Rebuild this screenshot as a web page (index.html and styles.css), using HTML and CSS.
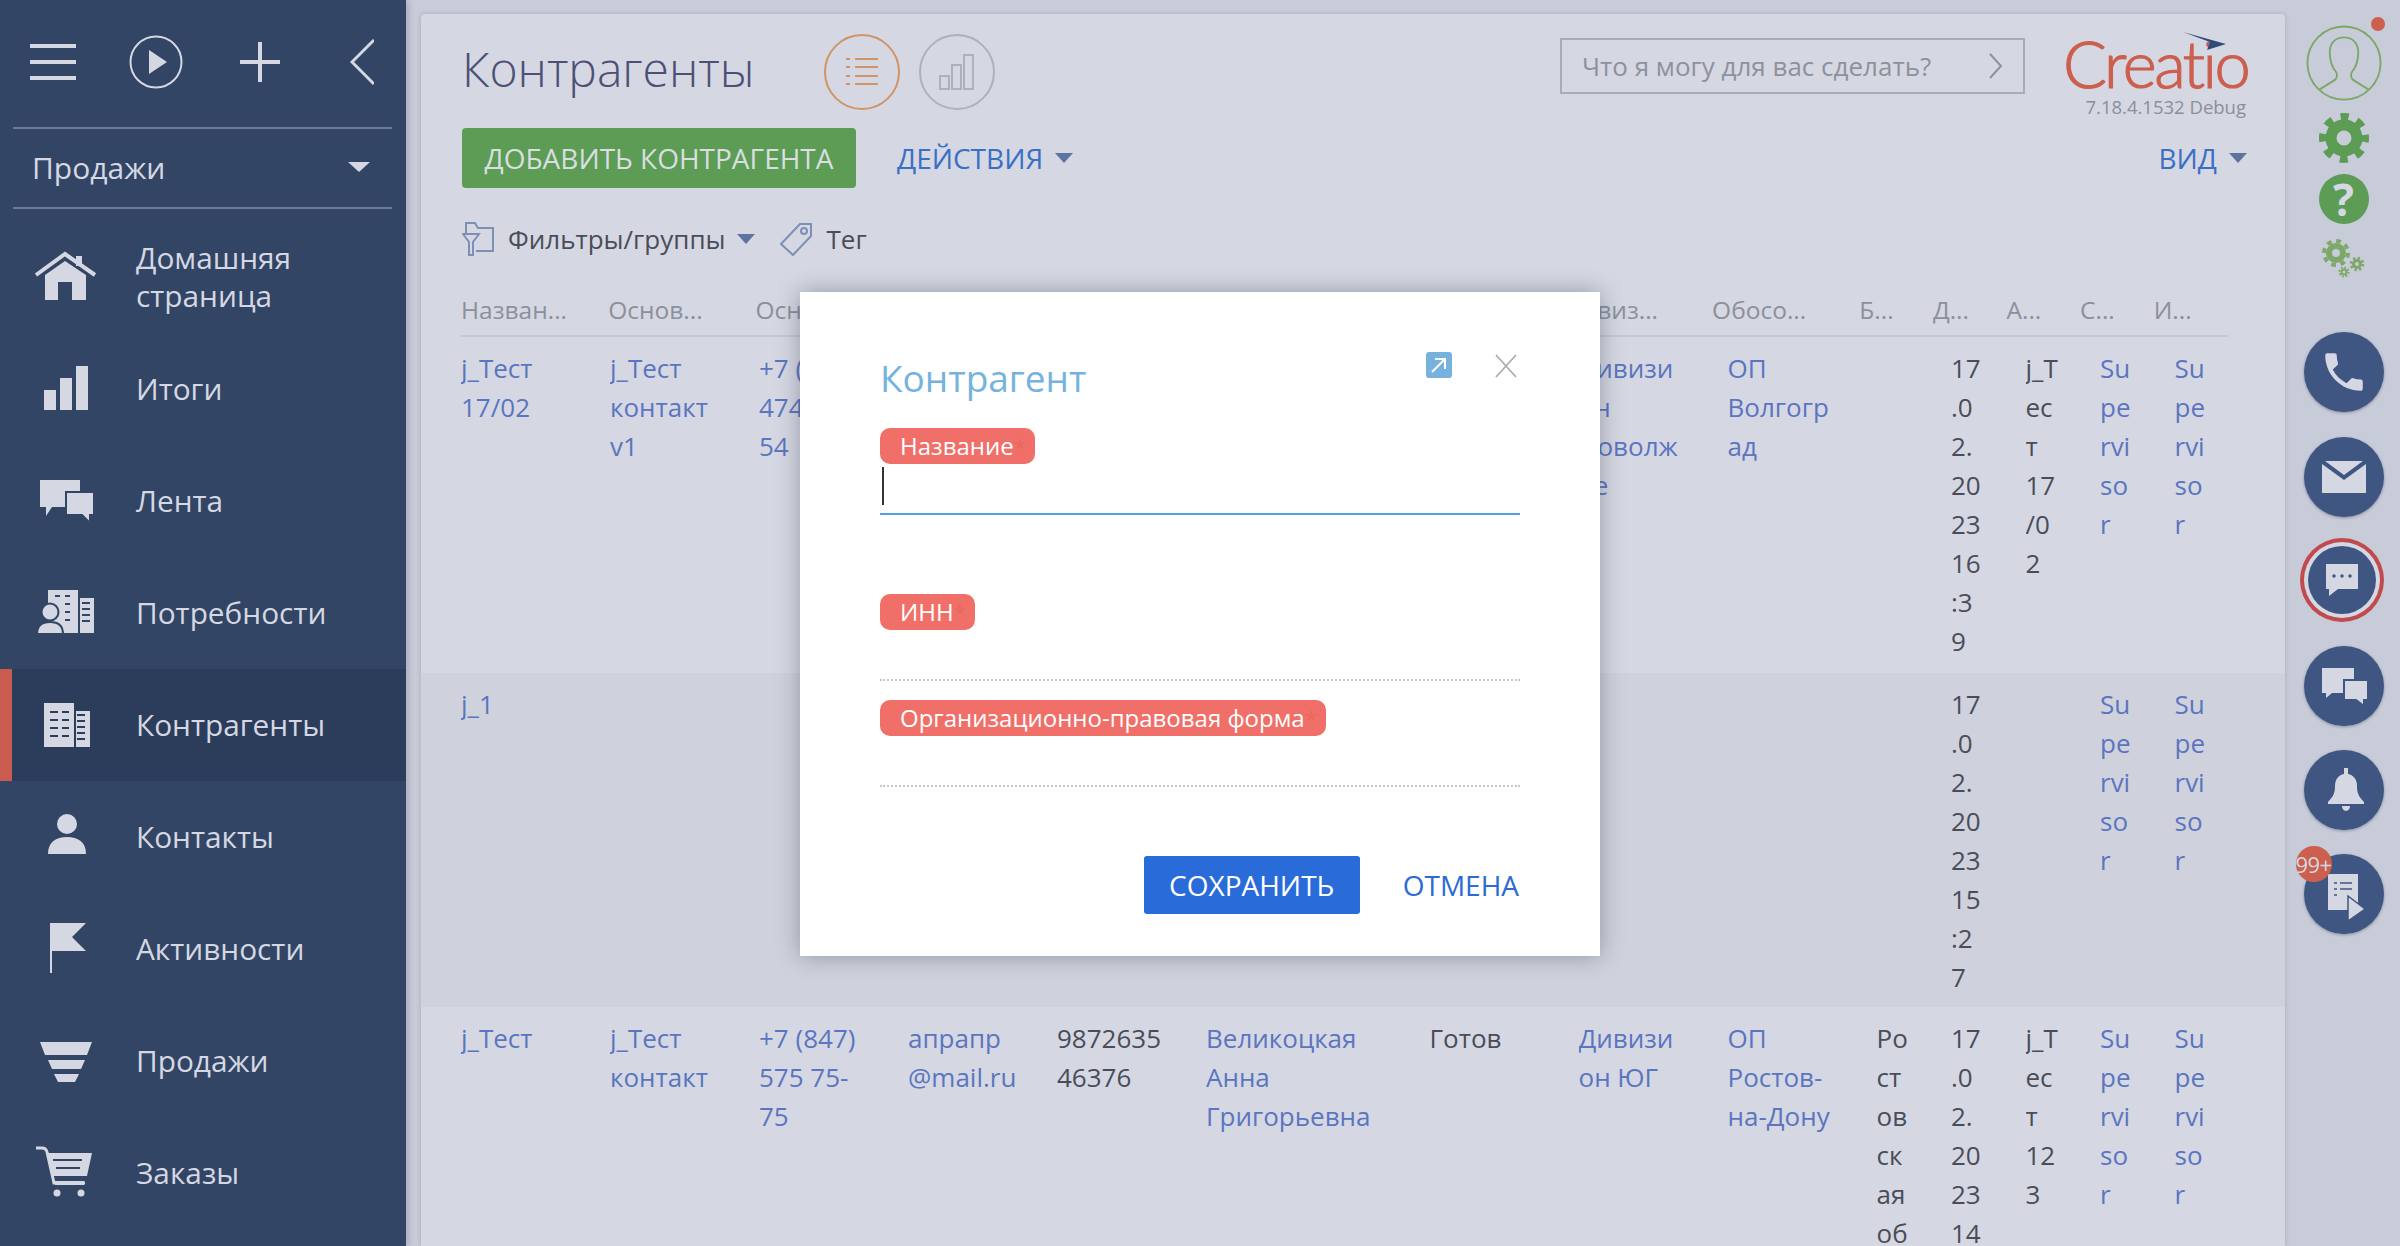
FILE: index.html
```html
<!DOCTYPE html>
<!-- Creatio accounts page with new account dialog -->
<html lang="ru">
<head>
  <meta charset="UTF-8" />
  <title>Контрагенты</title>
  <link rel="stylesheet" href="styles.css">
</head>
<body>
  <div class="app">
    <!-- Left sidebar -->
    <aside class="sidebar">
      <div class="side-top">
        <svg class="ic-burger" width="46" height="36" viewBox="0 0 46 36"><path d="M0 0h46v4H0zM0 16h46v4H0zM0 32h46v4H0z"/></svg>
        <svg class="ic-play" width="54" height="54" viewBox="0 0 54 54"><circle cx="27" cy="27" r="25.5" fill="none" stroke="currentColor" stroke-width="2"/><path d="M20 15l18 12-18 12z"/></svg>
        <svg class="ic-plus" width="40" height="40" viewBox="0 0 40 40"><path d="M18 0h4v18h18v4H22v18h-4V22H0v-4h18z"/></svg>
        <svg class="ic-back" width="24" height="46" viewBox="0 0 24 46"><path d="M24 1L2 23l22 22" fill="none" stroke="currentColor" stroke-width="3"/></svg>
      </div>
      <div class="side-section">
        <span>Продажи</span>
        <i class="caret caret-big"></i>
      </div>
      <nav class="menu">
        <div class="menu-item">
          <svg viewBox="0 0 64 64"><path d="M2 30L31 9l30 21" fill="none" stroke="currentColor" stroke-width="4"/><path d="M42 11h6v10h-6zM11 30l20-14 21 14v25H38V37H24v18H11z"/></svg>
          <span>Домашняя<br>страница</span>
        </div>
        <div class="menu-item">
          <svg viewBox="0 0 64 64"><path d="M10 33h12v20H10zM26 21h12v32H26zM42 9h12v44H42z"/></svg>
          <span>Итоги</span>
        </div>
        <div class="menu-item">
          <svg viewBox="0 0 64 64"><path d="M6 11h40v27H18l-6 9v-9H6z"/><path d="M32 23h28v23h-4v8l-8-8H32z" stroke="#324564" stroke-width="2"/></svg>
          <span>Лента</span>
        </div>
        <div class="menu-item">
          <svg viewBox="0 0 64 64"><path d="M14 9h30v43H14zM46 17h14v35H46z"/><path d="M21 15h5M31 15h5M31 23h5M31 31h5M31 39h5M48 22h8M48 28h8M48 34h8M48 40h8" stroke="#324564" stroke-width="2"/><circle cx="16" cy="31" r="8.5" stroke="#324564" stroke-width="2"/><path d="M3 53c0-9 6-12 13-12s13 3 13 12z" stroke="#324564" stroke-width="2"/></svg>
          <span>Потребности</span>
        </div>
        <div class="menu-item active">
          <svg viewBox="0 0 64 64"><path d="M10 10h30v44H10zM42 18h14v36H42z"/><path d="M16 19h8M28 19h7M16 27h8M28 27h7M16 35h8M28 35h7M16 43h8M28 43h7M43 22h8M43 28h8M43 34h8M43 40h8M43 46h8" stroke="#2c3d5b" stroke-width="2"/></svg>
          <span>Контрагенты</span>
        </div>
        <div class="menu-item">
          <svg viewBox="0 0 64 64"><circle cx="33" cy="19" r="10"/><path d="M14 49c0-12 8-17 19-17s19 5 19 17z"/></svg>
          <span>Контакты</span>
        </div>
        <div class="menu-item">
          <svg viewBox="0 0 64 64"><path d="M16 6h36L38 20l14 14H18v22h-2z"/></svg>
          <span>Активности</span>
        </div>
        <div class="menu-item">
          <svg viewBox="0 0 64 64"><path d="M6 13h52l-5 13H11zM14 31h37l-4 9H18zM20 45h25l-4 8H24z"/></svg>
          <span>Продажи</span>
        </div>
        <div class="menu-item">
          <svg viewBox="0 0 64 64"><path d="M2 7h6q4 0 5 4l7 31h31" fill="none" stroke="currentColor" stroke-width="3"/><path d="M13 12h45l-5 23H18z"/><path d="M19 19h29M22 27h24" stroke="#324564" stroke-width="2"/><path d="M20 40h30v4H21z"/><circle cx="23" cy="52" r="3.5"/><circle cx="47" cy="52" r="3.5"/></svg>
          <span>Заказы</span>
        </div>
      </nav>
    </aside>

    <!-- Main panel -->
    <main class="panel">
      <div class="title-row">
        <h1>Контрагенты</h1>
        <div class="view-btn view-list">
          <svg width="32" height="28" viewBox="0 0 32 28" fill="none" stroke="currentColor" stroke-width="2"><path d="M0 1h4M9 1h23M0 9h4M9 9h23M0 18h4M9 18h23M0 26h4M9 26h23"/></svg>
        </div>
        <div class="view-btn view-chart">
          <svg width="36" height="36" viewBox="0 0 36 36" fill="none" stroke="currentColor" stroke-width="2"><path d="M1 22h9v13H1zM13 11h9v24h-9zM25 1h9v34h-9z"/></svg>
        </div>
        <div class="search">
          <span>Что я могу для вас сделать?</span>
          <svg width="14" height="26" viewBox="0 0 14 26"><path d="M1 1l11 12L1 25" fill="none" stroke="currentColor" stroke-width="2"/></svg>
        </div>
        <div class="brand">
          <svg class="brand-arrow" width="43" height="18" viewBox="0 0 43 18"><path d="M0 0l43 12-19 6 3-8z" fill="#2f4a7c"/></svg>
          <div class="brand-name">Creatio</div>
          <div class="brand-ver">7.18.4.1532 Debug</div>
        </div>
      </div>

      <div class="action-row">
        <button class="btn-green">ДОБАВИТЬ КОНТРАГЕНТА</button>
        <span class="action-link">ДЕЙСТВИЯ</span><i class="caret"></i>
        <span class="action-link view-link">ВИД</span><i class="caret"></i>
      </div>

      <div class="filter-row">
        <svg width="32" height="34" viewBox="0 0 32 34" fill="none" stroke="#7d8fb5" stroke-width="2"><path d="M4 12V1h9l3 5h15v23H14"/><path d="M1 12h16l-6 8v13H7V20z"/></svg>
        <span class="filter-text">Фильтры/группы</span><i class="caret"></i>
        <svg class="ic-tag" width="32" height="34" viewBox="0 0 32 34" fill="none" stroke="#7d8fb5" stroke-width="2"><path d="M20 2h11v12L13 33 1 22z"/><circle cx="24" cy="9" r="3"/></svg>
        <span class="filter-text">Тег</span>
      </div>

      <!-- Grid header -->
      <div class="grid-row grid-head">
        <div class="c2">Назван...</div>
        <div class="c2">Основ...</div>
        <div class="c2">Осн...</div>
        <div class="c2"></div>
        <div class="c2"></div>
        <div class="c3"></div>
        <div class="c2"></div>
        <div class="c2">Дивиз...</div>
        <div class="c2">Обосо...</div>
        <div class="c1">Б...</div>
        <div class="c1">Д...</div>
        <div class="c1">А...</div>
        <div class="c1">С...</div>
        <div class="c1">И...</div>
      </div>

      <div class="grid-row">
        <div class="c2 link">j_Тест<br>17/02</div>
        <div class="c2 link">j_Тест<br>контакт<br>v1</div>
        <div class="c2 link">+7 (474)<br>474<br>54</div>
        <div class="c2"></div>
        <div class="c2"></div>
        <div class="c3"></div>
        <div class="c2"></div>
        <div class="c2 link">Дивизи<br>он<br>Поволж<br>ье</div>
        <div class="c2 link">ОП<br>Волгогр<br>ад</div>
        <div class="c1"></div>
        <div class="c1">17<br>.0<br>2.<br>20<br>23<br>16<br>:3<br>9</div>
        <div class="c1">j_Т<br>ес<br>т<br>17<br>/0<br>2</div>
        <div class="c1 link">Su<br>pe<br>rvi<br>so<br>r</div>
        <div class="c1 link">Su<br>pe<br>rvi<br>so<br>r</div>
      </div>

      <div class="grid-row row-alt">
        <div class="c2 link">j_1</div>
        <div class="c2"></div>
        <div class="c2"></div>
        <div class="c2"></div>
        <div class="c2"></div>
        <div class="c3"></div>
        <div class="c2"></div>
        <div class="c2"></div>
        <div class="c2"></div>
        <div class="c1"></div>
        <div class="c1">17<br>.0<br>2.<br>20<br>23<br>15<br>:2<br>7</div>
        <div class="c1"></div>
        <div class="c1 link">Su<br>pe<br>rvi<br>so<br>r</div>
        <div class="c1 link">Su<br>pe<br>rvi<br>so<br>r</div>
      </div>

      <div class="grid-row">
        <div class="c2 link">j_Тест</div>
        <div class="c2 link">j_Тест<br>контакт</div>
        <div class="c2 link">+7 (847)<br>575 75-<br>75</div>
        <div class="c2 link">апрапр<br>@mail.ru</div>
        <div class="c2">9872635<br>46376</div>
        <div class="c3 link">Великоцкая<br>Анна<br>Григорьевна</div>
        <div class="c2">Готов</div>
        <div class="c2 link">Дивизи<br>он ЮГ</div>
        <div class="c2 link">ОП<br>Ростов-<br>на-Дону</div>
        <div class="c1">Ро<br>ст<br>ов<br>ск<br>ая<br>об</div>
        <div class="c1">17<br>.0<br>2.<br>20<br>23<br>14</div>
        <div class="c1">j_Т<br>ес<br>т<br>12<br>3</div>
        <div class="c1 link">Su<br>pe<br>rvi<br>so<br>r</div>
        <div class="c1 link">Su<br>pe<br>rvi<br>so<br>r</div>
      </div>
    </main>

    <!-- Right rail -->
    <aside class="rail">
      <div class="avatar">
        <svg width="76" height="76" viewBox="0 0 80 80" fill="none" stroke="#7ea86a" stroke-width="2"><circle cx="40" cy="40" r="38.5"/><path d="M14 68l16-10c3-2 3-6 2-8-5-6-7-12-7-21 0-10 6-16 15-16s15 6 15 16c0 9-2 15-7 21-1 2-1 6 2 8l16 10"/></svg>
        <i class="avatar-dot"></i>
      </div>
      <svg class="gear" width="50" height="50" viewBox="-25 -25 50 50" fill="none" stroke="#5c9c55"><circle r="13" stroke-width="11"/><circle r="21" stroke-width="8" stroke-dasharray="8 8.49" stroke-dashoffset="4"/></svg>
      <div class="help">?</div>
      <svg class="gears" width="44" height="40" viewBox="0 0 44 40" fill="none" stroke="#7ea86a">
        <circle cx="14" cy="15" r="7" stroke-width="6"/><circle cx="14" cy="15" r="12" stroke-width="4" stroke-dasharray="4.7 4.7"/>
        <circle cx="35" cy="26" r="3.5" stroke-width="3"/><circle cx="35" cy="26" r="6" stroke-width="2.5" stroke-dasharray="2.4 2.3"/>
        <circle cx="22" cy="34" r="2.5" stroke-width="2"/><circle cx="22" cy="34" r="4.5" stroke-width="2" stroke-dasharray="1.8 1.7"/>
      </svg>

      <div class="round first">
        <svg width="50" height="50" viewBox="0 0 24 24"><path d="M6.6 10.8c1.4 2.8 3.8 5.1 6.6 6.6l2.2-2.2c.3-.3.7-.4 1-.2 1.1.4 2.3.6 3.6.6.6 0 1 .4 1 1V20c0 .6-.4 1-1 1C10.6 21 3 13.4 3 4c0-.6.4-1 1-1h3.5c.6 0 1 .4 1 1 0 1.3.2 2.5.6 3.6.1.3 0 .7-.2 1z"/></svg>
      </div>
      <div class="round">
        <svg width="80" height="80" viewBox="0 0 80 80"><path d="M18 27l22 16 22-16v29H18zM21 24h38L40 38z"/></svg>
      </div>
      <div class="round round-ring">
        <svg width="68" height="68" viewBox="0 0 68 68"><path d="M18 18h32v25H30l-9 7v-7h-3z"/><circle cx="26" cy="30" r="1.7" fill="#405682"/><circle cx="34" cy="30" r="1.7" fill="#405682"/><circle cx="42" cy="30" r="1.7" fill="#405682"/></svg>
      </div>
      <div class="round">
        <svg width="80" height="80" viewBox="0 0 80 80"><path d="M18 22h32v25H28l-6 5v-5h-4z"/><path d="M40 34h24v20h-4v6l-8-6H40z" stroke="#405682" stroke-width="2"/></svg>
      </div>
      <div class="round">
        <svg width="80" height="80" viewBox="0 0 80 80"><path d="M40 18h4v6c6 1 9 6 9 12 0 6 1 10 7 16v2H24v-2c6-6 7-10 7-16 0-6 3-11 9-12zM38 56h8a4 5 0 0 1-8 0z"/></svg>
      </div>
      <div class="round">
        <svg width="80" height="80" viewBox="0 0 80 80"><path d="M24 20h30v36H24z"/><path d="M30 29h3M36 29h12M30 35h3M36 35h12M30 41h3" stroke="#405682" stroke-width="1.6"/><path d="M44 42l17 13-17 12z" stroke="#405682" stroke-width="1.5"/></svg>
        <span class="badge">99+</span>
      </div>
    </aside>
  </div>

  <!-- New account dialog -->
  <div class="modal">
    <div class="modal-head">
      <h2>Контрагент</h2>
      <div class="modal-open">
        <svg width="16" height="16" viewBox="0 0 16 16" fill="none" stroke="#fff" stroke-width="2"><path d="M1 15L14 2M4 2h10v10"/></svg>
      </div>
      <svg class="modal-close" width="22" height="24" viewBox="0 0 22 24" fill="none" stroke="#a8a8a8" stroke-width="1.6"><path d="M1 1l20 22M21 1L1 23"/></svg>
    </div>
    <div class="field field-focus">
      <label class="pill">Название<em>*</em></label>
      <div class="input"><i class="cursor"></i></div>
    </div>
    <div class="field field-gap">
      <label class="pill">ИНН<em>*</em></label>
      <div class="input"></div>
    </div>
    <div class="field">
      <label class="pill">Организационно-правовая форма<em>*</em></label>
      <div class="input"></div>
    </div>
    <div class="modal-foot">
      <button class="btn-save">СОХРАНИТЬ</button>
      <span class="btn-cancel">ОТМЕНА</span>
    </div>
  </div>
</body>
</html>
```
FILE: styles.css
```css
/* General page */
html, body { margin: 0; height: 1246px; overflow: hidden; }
body { font-family: "Open Sans", "Liberation Sans", sans-serif; background: #c8cbd8; color: #4a4d58; font-size: 26px; position: relative; }
.app { display: flex; height: 1246px; }
svg { display: block; flex: none; }
.caret { display: inline-block; width: 0; height: 0; border-left: 9px solid transparent; border-right: 9px solid transparent; border-top: 10px solid #5e73a0; flex: none; }

/* Sidebar */
.sidebar { width: 406px; flex: none; background: #324564; color: #d5d8e3; fill: currentColor; box-shadow: 2px 0 6px rgba(60, 70, 100, .25); }
.side-top { height: 127px; margin: 0 14px 0 13px; padding-left: 17px; display: flex; align-items: center; border-bottom: 2px solid #6c7a95; overflow: hidden; }
.side-top svg { margin-top: -4px; }
.ic-play { margin-left: 53px; }
.ic-plus { margin-left: 57px; }
.ic-back { margin-left: 70px; }
.side-section { height: 76px; padding: 0 22px 2px 19px; margin: 0 14px 0 13px; display: flex; align-items: center; justify-content: space-between; border-bottom: 2px solid #6c7a95; font-size: 30px; }
.caret-big { border-left-width: 11px; border-right-width: 11px; border-top: 10px solid #d5d8e3; }
.menu { padding-top: 12px; }
.menu-item { height: 112px; padding-left: 34px; display: flex; align-items: center; gap: 38px; font-size: 29.8px; line-height: 38px; box-sizing: border-box; }
.menu-item svg { width: 64px; height: 64px; }
.menu-item.active { background: #2c3d5b; border-left: 12px solid #c95c4e; padding-left: 22px; }

/* Main panel */
.panel { width: 1864px; flex: none; margin: 14px 0 0 15px; background: #d5d8e2; border-radius: 4px 4px 0 0; overflow: hidden; box-shadow: 0 0 4px rgba(90, 95, 120, .3); }
.title-row { height: 114px; padding: 0 35px 0 41px; display: flex; align-items: center; }
h1 { margin: -6px 0 0; font-size: 48px; font-weight: 300; color: #4c5075; width: 291px; white-space: nowrap; }
.view-btn { width: 76px; height: 76px; border-radius: 50%; border: 2px solid; box-sizing: border-box; display: flex; align-items: center; justify-content: center; margin-top: 2px; }
.view-list { color: #cf9468; margin-left: 71px; }
.view-chart { color: #aeb1bb; margin-left: 19px; }
.search { width: 465px; height: 56px; margin: -10px 0 0 565px; padding: 0 20px; border: 2px solid #a9acb7; box-sizing: border-box; display: flex; align-items: center; justify-content: space-between; color: #8e919d; }
.brand { width: 185px; margin-left: 40px; position: relative; margin-top: 10px; text-align: right; }
.brand-name { font-family: Lato, "Open Sans", sans-serif; font-size: 65px; font-weight: 300; line-height: 62px; letter-spacing: -2.5px; color: #cc5f4e; text-align: left; -webkit-text-stroke: 1.2px #cc5f4e; margin-left: -2px; }
.brand-arrow { position: absolute; left: 118px; top: 0; }
.brand-ver { font-size: 18.5px; line-height: 26px; color: #8b8f9b; padding-right: 4px; white-space: nowrap; }

.action-row { height: 60px; padding: 0 38px 0 41px; display: flex; align-items: center; }
.btn-green { height: 60px; width: 394px; border: 0; padding: 0; border-radius: 4px; background: #5c9c55; color: #d9dee0; font: 28px "Open Sans", sans-serif; }
.action-link { color: #3a6fc6; font-size: 28px; margin-left: 41px; margin-right: 12px; }
.view-link { margin-left: auto; }

.filter-row { height: 102px; padding-left: 41px; display: flex; align-items: center; }
.filter-text { margin-left: 14px; margin-right: 12px; }
.ic-tag { margin-left: 25px; }

/* Grid */
.grid-row { display: grid; grid-template-columns: repeat(24, 74.5px); padding: 12px 0 12px 40px; line-height: 39px; height: 336px; box-sizing: border-box; }
.grid-row > div { white-space: nowrap; overflow: hidden; }
.c1 { grid-column: span 1; }
.c2 { grid-column: span 2; }
.c3 { grid-column: span 3; }
.link { color: #5b75c0; }
.row-alt { background: #cfd2dc; height: 334px; }
.grid-head { grid-template-columns: repeat(24, 73.6px); height: 47px; padding: 0 0 8px 40px; color: #8c909c; font-size: 24.5px; position: relative; }
.grid-head::after { content: ""; position: absolute; left: 40px; width: 1767px; bottom: 0; border-bottom: 2px solid #c5c8d2; }

/* Right rail */
.rail { flex: 1; display: flex; flex-direction: column; align-items: center; padding-left: 2px; }
.avatar { margin-top: 25px; position: relative; width: 76px; height: 76px; }
.avatar-dot { position: absolute; right: -3px; top: -8px; width: 14px; height: 14px; border-radius: 50%; background: #cc5f4e; }
.gear { margin-top: 12px; }
.help { width: 50px; height: 50px; margin-top: 11px; border-radius: 50%; background: #5c9c55; color: #d5d8e2; font-size: 44px; font-weight: 700; line-height: 50px; text-align: center; }
.gears { margin-top: 14px; }
.round { width: 80px; height: 80px; border-radius: 50%; background: #405682; color: #d5d8e2; fill: currentColor; display: flex; align-items: center; justify-content: center; position: relative; margin-top: 24px; box-shadow: 0 1px 3px rgba(50, 60, 90, .45); flex: none; }
.first { margin-top: 54px; }
.round.first + .round { margin-top: 25px; }
.round-ring { width: 68px; height: 68px; margin-top: 29px; margin-bottom: 32px; box-shadow: 0 0 0 4px #d5d8e2, 0 0 0 8px #c14a4e; margin-left: -4px; }
.round-ring + .round { margin-top: 0; }
.badge { position: absolute; left: -8px; top: -8px; width: 36px; height: 36px; border-radius: 50%; background: #cc5f4e; font-size: 22px; display: flex; align-items: center; justify-content: center; white-space: nowrap; letter-spacing: -.5px; }

/* Dialog */
.modal { position: absolute; left: 800px; top: 292px; width: 800px; height: 664px; padding: 60px 80px 0; box-sizing: border-box; background: #fff; box-shadow: 0 0 22px rgba(50, 55, 80, .4); }
.modal-head { display: flex; align-items: flex-start; height: 76px; }
h2 { margin: 0; font-size: 37px; font-weight: 400; line-height: 52px; color: #75b3de; flex: 1; }
.modal-open { width: 26px; height: 26px; border-radius: 3px; background: #75b3de; display: flex; align-items: center; justify-content: center; }
.modal-close { margin: 2px 3px 0 43px; }
.field { height: 106px; }
.field-focus { height: 166px; }
.pill { display: inline-block; height: 36px; line-height: 36px; padding: 0 9px 0 20px; border-radius: 10px; background: #f06f68; color: #fff; font-size: 24px; vertical-align: top; }
.pill em { color: #e8685c; font-style: normal; font-size: 22px; }
.input { height: 49px; border-bottom: 2px dotted #c8c8c8; position: relative; }
.field-focus .input { border-bottom: 2px solid #4aa3df; }
.cursor { position: absolute; left: 2px; top: 3px; width: 2px; height: 38px; background: #333; }
.modal-foot { margin-top: 50px; padding-right: 1px; display: flex; align-items: center; justify-content: flex-end; }
.btn-save { width: 216px; height: 58px; border: 0; border-radius: 3px; background: #286bd9; color: #fff; font: 28px "Open Sans", sans-serif; }
.btn-cancel { margin-left: 43px; color: #2a6bd6; font-size: 28px; }
```
